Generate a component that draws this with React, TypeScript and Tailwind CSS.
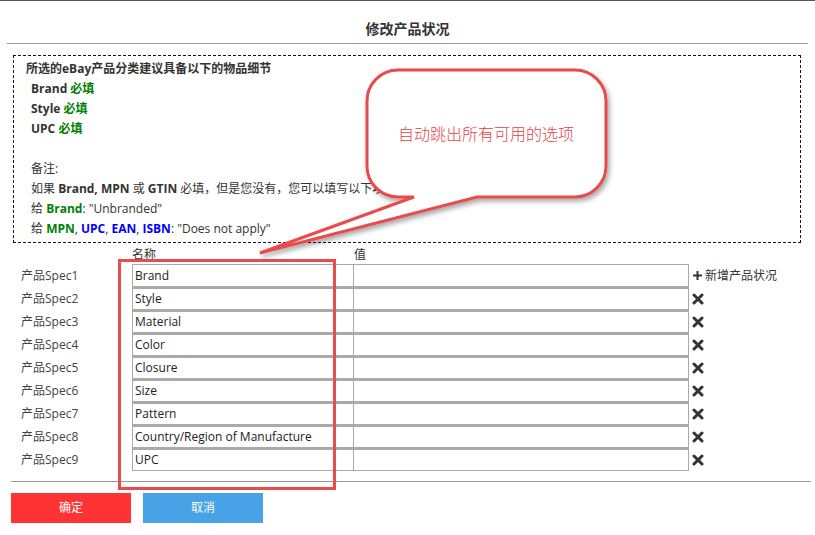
import React from 'react';

const specs = ['Brand', 'Style', 'Material', 'Color', 'Closure', 'Size', 'Pattern', 'Country/Region of Manufacture', 'UPC'];

const XIcon = () => (
  <svg width="12" height="12" viewBox="0 0 12 12">
    <path d="M2 2 L10 10 M10 2 L2 10" stroke="#333" strokeWidth="3" strokeLinecap="round" />
  </svg>
);

const PlusIcon = () => (
  <svg width="11" height="11" viewBox="0 0 11 11">
    <path d="M5.5 1 V10 M1 5.5 H10" stroke="#333" strokeWidth="2" />
  </svg>
);

export default function App() {
  return (
    <div className="relative w-[815px] h-[535px] bg-white border-t border-[#555] text-[12px] text-[#333] font-['Open_Sans','Noto_Sans_CJK_SC',sans-serif] overflow-hidden">
      <div className="h-[42px] flex items-center justify-center text-[14px] font-bold text-[#333] pt-[12px]">修改产品状况</div>
      <div className="mx-[7px] border-t border-[#999]" />

      <div className="ml-[13px] w-[788px] h-[188px] mt-[11px] border border-dashed border-[#111] pl-[12px] pt-[3px] leading-[20px]">
        <div className="font-bold">所选的eBay产品分类建议具备以下的物品细节</div>
        <div className="pl-[5px] font-bold">Brand <span className="text-[#008000]">必填</span></div>
        <div className="pl-[5px] font-bold">Style <span className="text-[#008000]">必填</span></div>
        <div className="pl-[5px] font-bold">UPC <span className="text-[#008000]">必填</span></div>
        <div className="h-[20px]" />
        <div className="pl-[5px]">备注:</div>
        <div className="pl-[5px]">如果 <b>Brand, MPN</b> 或 <b>GTIN</b> 必填，但是您没有，您可以填写以下项</div>
        <div className="pl-[5px]">给 <b className="text-[#008000]">Brand</b>: "Unbranded"</div>
        <div className="pl-[5px]">给 <b className="text-[#008000]">MPN</b>, <b className="text-[#0000ff]">UPC</b>, <b className="text-[#0000ff]">EAN</b>, <b className="text-[#0000ff]">ISBN</b>: "Does not apply"</div>
      </div>

      <div className="flex h-[19px] items-end leading-[14px] text-[12px]">
        <div className="w-[132px]" />
        <div className="w-[222px]">名称</div>
        <div>值</div>
      </div>

      <div className="mt-[2px] flex flex-col">
        {specs.map((s, i) => (
          <div key={s} className="flex h-[23px] items-center">
            <div className="w-[132px] pl-[21px] text-[#444]">产品Spec{i + 1}</div>
            <div className={`w-[222px] h-[23px] border border-[#aaa] pl-[2px] flex items-center text-[#222] ${i > 0 ? 'border-t-[2px]' : ''}`}>{s}</div>
            <div className={`w-[335px] h-[23px] border border-l-0 border-[#aaa] ${i > 0 ? 'border-t-[2px]' : ''}`} />
            <div className="pl-[3px] flex items-center">
              {i === 0 ? (
                <span className="flex items-center gap-[2px] text-[#333]"><PlusIcon />新增产品状况</span>
              ) : (
                <span className="flex"><XIcon /></span>
              )}
            </div>
          </div>
        ))}
      </div>

      <div className="ml-[11px] mr-[4px] mt-[10px] border-t border-[#999]" />

      <div className="flex gap-[12px] ml-[11px] mt-[11px]">
        <button className="w-[120px] h-[30px] bg-[#ff3333] text-white text-[12px]">确定</button>
        <button className="w-[120px] h-[30px] bg-[#47a3e5] text-white text-[12px]">取消</button>
      </div>

      {/* annotation overlay */}
      <div className="absolute left-[118px] top-[258px] w-[218px] h-[231px] border-[3px] border-[#e84c4c] pointer-events-none" />
      <svg className="absolute left-0 top-0 pointer-events-none" width="815" height="535">
        <defs>
          <filter id="sh" x="-20%" y="-20%" width="140%" height="140%">
            <feDropShadow dx="2" dy="3" stdDeviation="2.5" floodColor="#000" floodOpacity="0.35" />
          </filter>
        </defs>
        <path
          d="M398 69 H575 A31 31 0 0 1 606 100 V165 A31 31 0 0 1 575 196 H477 L260 252 L414 196 H398 A31 31 0 0 1 367 165 V100 A31 31 0 0 1 398 69 Z"
          fill="#fff"
          stroke="#e84c4c"
          strokeWidth="3"
          strokeLinejoin="miter"
          filter="url(#sh)"
        />
      </svg>
      <div className="absolute left-[366px] top-[121px] w-[240px] text-center text-[16px] leading-[22px] text-[#e43f3f] font-['Noto_Sans_CJK_SC',sans-serif] font-light">
        自动跳出所有可用的选项
      </div>
    </div>
  );
}
